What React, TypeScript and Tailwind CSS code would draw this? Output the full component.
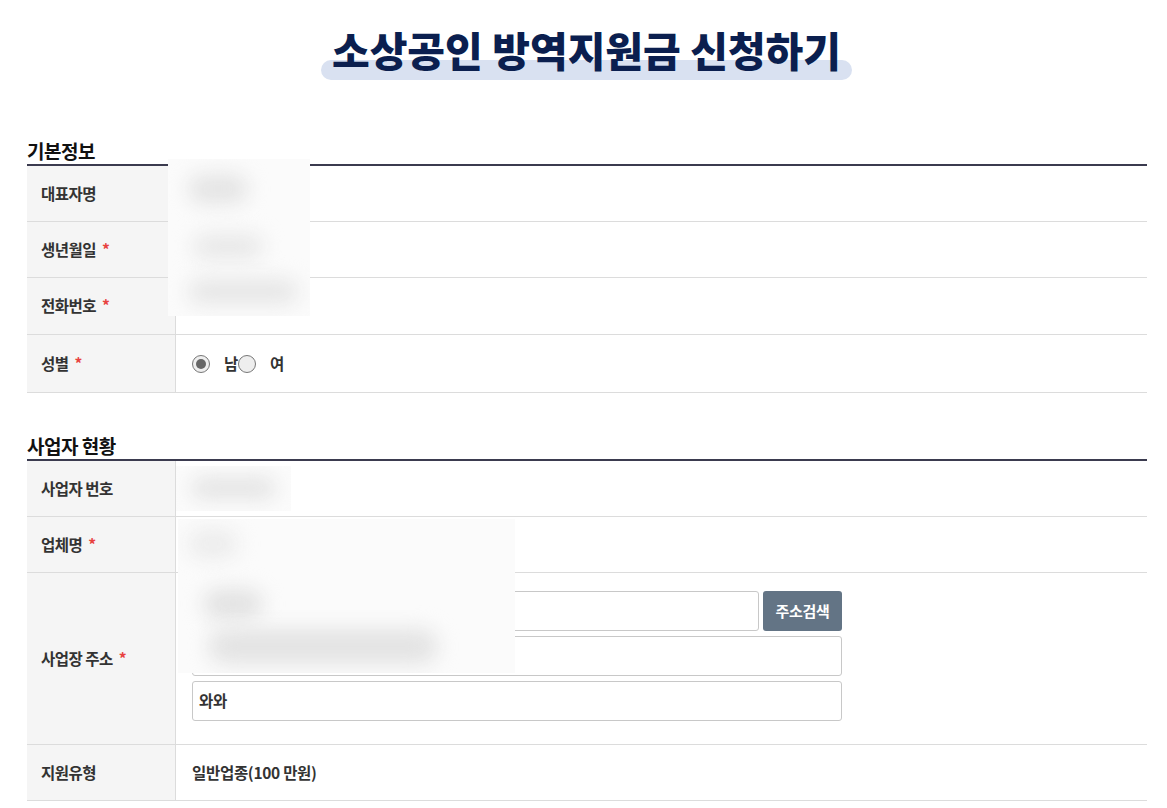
import React from 'react';

const font = { fontFamily: '"Noto Sans CJK KR", "Noto Sans", sans-serif' };

const Required = () => <span className="ml-[6px] text-[#e8423f]">*</span>;

const Row: React.FC<{ label: string; required?: boolean; h?: string; valueClass?: string; children?: React.ReactNode }> = ({ label, required, h = 'h-[56px]', valueClass = 'items-center', children }) => (
    <div className={`flex border-b border-[#dcdcdc] ${h}`}>
        <div className="w-[149px] shrink-0 bg-[#f5f5f5] border-r border-[#dcdcdc] flex items-center pl-[14px] text-[15.5px] font-bold text-[#333] tracking-[-0.5px]">
            {label}
            {required && <Required />}
        </div>
        <div className={`flex-1 flex pl-[16px] text-[15.5px] font-bold text-[#333] tracking-[-0.3px] ${valueClass}`}>{children}</div>
    </div>
);

// privacy blur patch laid over the form
const Blur: React.FC<{ className: string; blobs: { x: number; y: number; w: number; h: number; c: string }[] }> = ({ className, blobs }) => (
    <div className={`absolute bg-[#fbfbfb] overflow-hidden ${className}`}>
        {blobs.map((b, i) => (
            <div
                key={i}
                className="absolute rounded-full blur-[10px]"
                style={{ left: b.x, top: b.y, width: b.w, height: b.h, background: b.c }}
            />
        ))}
    </div>
);

const Radio: React.FC<{ checked?: boolean }> = ({ checked }) => (
    <span className="w-[18px] h-[18px] rounded-full border border-[#777] bg-[#eee] flex items-center justify-center">
        {checked && <span className="w-[10px] h-[10px] rounded-full bg-[#666]" />}
    </span>
);

export default function App() {
    return (
        <div className="w-[1167px] min-h-[808px] bg-white relative" style={font}>
            <div className="flex justify-center pt-[22px]">
                <div className="relative px-[11px] translate-x-[3px]">
                    <div className="absolute left-0 right-0 bottom-[-4px] h-[20px] rounded-full bg-[#d9e1f1]" />
                    <h1 className="relative text-[41px] leading-[54px] font-black text-[#0b1f4f] tracking-[0px]">소상공인 방역지원금 신청하기</h1>
                </div>
            </div>

            <div className="px-[27px] pr-[20px]">
                <h2 className="mt-[62px] text-[19px] font-bold text-[#111] leading-[26px] tracking-[-0.5px]">기본정보</h2>
                <div className="border-t-2 border-[#3b3b4f]">
                    <Row label="대표자명" />
                    <Row label="생년월일" required />
                    <Row label="전화번호" required h="h-[57px]" />
                    <Row label="성별" required h="h-[58px]">
                        <div className="flex items-center">
                            <Radio checked />
                            <span className="ml-[14px]">남</span>
                            <Radio />
                            <span className="ml-[14px]">여</span>
                        </div>
                    </Row>
                </div>

                <h2 className="mt-[40px] text-[19px] font-bold text-[#111] leading-[26px] tracking-[-0.5px]">사업자 현황</h2>
                <div className="border-t-2 border-[#3b3b4f]">
                    <Row label="사업자 번호" />
                    <Row label="업체명" required />
                    <Row label="사업장 주소" required h="h-[172px]" valueClass="items-start pt-[18px]">
                        <div className="flex flex-col gap-[5px] w-[650px]">
                            <div className="flex gap-[4px]">
                                <div className="flex-1 h-[40px] border border-[#c8c8c8] rounded-[3px]" />
                                <button className="w-[79px] h-[40px] rounded-[3px] bg-[#637485] text-white text-[15px] font-bold">주소검색</button>
                            </div>
                            <div className="h-[40px] border border-[#c8c8c8] rounded-[3px]" />
                            <div className="h-[40px] border border-[#c8c8c8] rounded-[3px] flex items-center pl-[6px]">와와</div>
                        </div>
                    </Row>
                    <Row label="지원유형">일반업종(100 만원)</Row>
                </div>
            </div>

            <Blur
                className="left-[168px] top-[159px] w-[142px] h-[157px]"
                blobs={[
                    { x: 20, y: 15, w: 60, h: 30, c: '#e4e4e4' },
                    { x: 25, y: 75, w: 70, h: 25, c: '#e8e8e8' },
                    { x: 20, y: 120, w: 110, h: 25, c: '#e6e6e6' },
                ]}
            />
            <Blur
                className="left-[176px] top-[466px] w-[115px] h-[45px]"
                blobs={[{ x: 15, y: 12, w: 85, h: 20, c: '#e2e2e2' }]}
            />
            <Blur
                className="left-[178px] top-[519px] w-[337px] h-[154px]"
                blobs={[
                    { x: 10, y: 10, w: 50, h: 30, c: '#ececec' },
                    { x: 25, y: 70, w: 60, h: 30, c: '#e2e2e2' },
                    { x: 30, y: 110, w: 230, h: 35, c: '#e3e3e3' },
                ]}
            />
        </div>
    );
}
